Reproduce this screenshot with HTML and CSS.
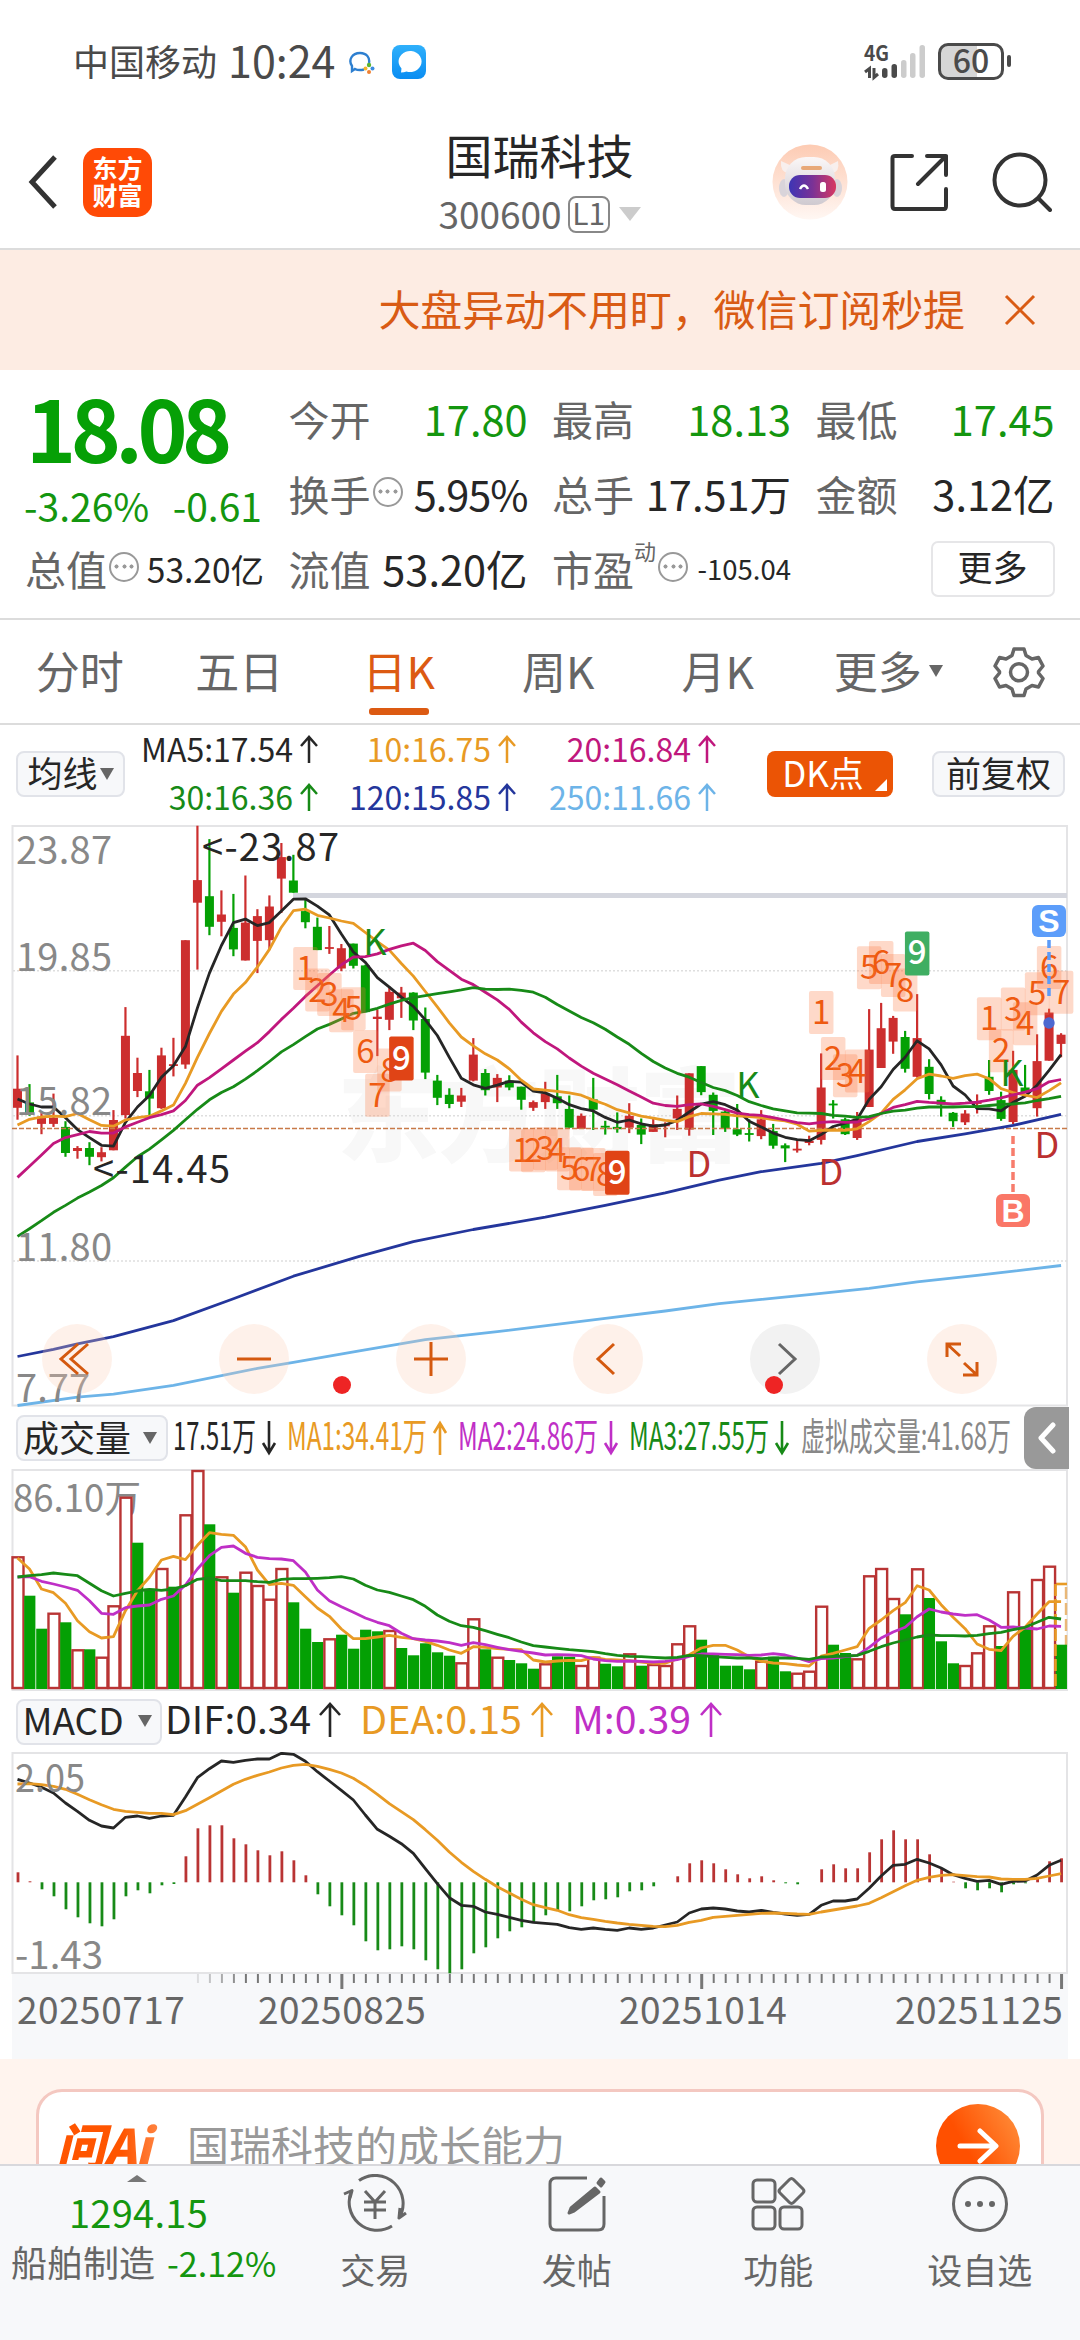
FILE: index.html
```html
<!DOCTYPE html>
<html lang="zh-CN">
<head>
    <meta charset="UTF-8">
    <meta name="viewport" content="width=device-width, initial-scale=1.0">
    <title>国瑞科技 300600</title>
    <link rel="stylesheet" href="styles.css">
</head>
<body>
    <div class="status-bar">
        <span class="carrier">中国移动</span>
        <span class="clock">10:24</span>
        <svg class="status-chat" width="26" height="24" viewBox="0 0 26 24">
            <path d="M15 18.500C11 19.500 8 19 6 18L3 20V15C-1 9 3 2 11 2C18 2 21 7 20 12" fill="none" stroke="#2d7fd0" stroke-width="2.400"/>
            <circle cx="20" cy="14" r="2.200" fill="#5cb531"/>
            <circle cx="23.500" cy="17.500" r="2" fill="#3c8ce0"/>
            <circle cx="16.500" cy="17.500" r="2" fill="#f5b52a"/>
            <circle cx="20" cy="21" r="2" fill="#f08030"/>
        </svg>
        <svg class="status-msg" width="34" height="34" viewBox="0 0 34 34">
            <defs><linearGradient id="msg" x1="0" y1="0" x2="0" y2="1"><stop offset="0" stop-color="#2fb0fb"/><stop offset="1" stop-color="#0a8df2"/></linearGradient></defs>
            <rect width="34" height="34" rx="8" fill="url(#msg)"/>
            <path d="M9 27.500L9.500 23.500A11.500 10.500 0 1 1 14.500 26.500Q12 27.500 9 27.500Z" fill="#fff"/>
        </svg>
        <svg class="signal" width="62" height="36" viewBox="0 0 62 36">
            <text x="0" y="17" font-size="21" font-weight="700" fill="#4a4a4a" textLength="25" lengthAdjust="spacingAndGlyphs">4G</text>
            <path d="M5.500 34V24.500L1 28M10 24V33.500L14 30" fill="none" stroke="#4a4a4a" stroke-width="3"/>
            <rect x="18" y="24" width="5.500" height="10" rx="2.700" fill="#4a4a4a"/>
            <rect x="27.500" y="20" width="5.500" height="14" rx="2.700" fill="#4a4a4a"/>
            <rect x="37" y="16" width="5.500" height="18" rx="2.700" fill="#ccc"/>
            <rect x="46" y="9" width="5.500" height="25" rx="2.700" fill="#ccc"/>
            <rect x="55.500" y="1" width="5.500" height="33" rx="2.700" fill="#ccc"/>
        </svg>
        <div class="battery">60</div>
        <div class="battery-tip"></div>
    </div>

    <div class="header">
        <svg class="back" width="32" height="56" viewBox="0 0 32 56"><path d="M28 3L5 28L28 53" fill="none" stroke="#333" stroke-width="5"/></svg>
        <div class="brand">东方<br>财富</div>
        <div class="stock">
            <div class="stock-name">国瑞科技</div>
            <div class="stock-code">300600<span class="level">L1</span><span class="tri tri-light"></span></div>
        </div>
        <svg class="robot" width="76" height="76" viewBox="0 0 76 76">
            <defs>
                <linearGradient id="halo" x1="0" y1="0" x2="0" y2="1"><stop offset="0" stop-color="#fdcbb3"/><stop offset="1" stop-color="#fff7f3"/></linearGradient>
                <linearGradient id="shell" x1="0" y1="0" x2="0" y2="1"><stop offset="0" stop-color="#fbf7f7"/><stop offset="1" stop-color="#cfcad0"/></linearGradient>
                <linearGradient id="visor"><stop offset="0" stop-color="#3d35b5"/><stop offset=".5" stop-color="#7a3296"/><stop offset="1" stop-color="#d83862"/></linearGradient>
            </defs>
            <circle cx="38" cy="38" r="37.500" fill="url(#halo)"/>
            <path d="M9 17Q8 28 16 29L20 22ZM66 17Q68 28 60 29L56 22Z" fill="#f8efed"/>
            <ellipse cx="12" cy="44" rx="5" ry="9" fill="#d9d4da"/>
            <ellipse cx="65" cy="44" rx="5" ry="9" fill="#d9d4da"/>
            <rect x="13" y="13" width="50" height="48" rx="21" fill="url(#shell)"/>
            <rect x="29" y="22" width="21" height="4" rx="2" fill="#e8a878"/>
            <rect x="17" y="31" width="47" height="23" rx="11" fill="url(#visor)"/>
            <path d="M28 45Q32 38 36 45" fill="none" stroke="#fff" stroke-width="2.500"/>
            <rect x="48" y="38" width="6" height="10" rx="2.500" fill="#fff"/>
        </svg>
        <svg class="share" width="58" height="58" viewBox="0 0 58 58" fill="none" stroke="#333" stroke-width="4" stroke-linecap="round" stroke-linejoin="round">
            <path d="M22 3H5Q2.500 3 2.500 5V53Q2.500 56 5 56H54Q56 56 56 53V36M37 3H56V22M56 3L28 31"/>
        </svg>
        <svg class="search" width="60" height="60" viewBox="0 0 60 60" fill="none" stroke="#333" stroke-width="4" stroke-linecap="round">
            <circle cx="28" cy="28" r="25.500"/><path d="M47 47L58 58"/>
        </svg>
    </div>

    <div class="notice">
        <span>大盘异动不用盯，微信订阅秒提</span>
        <svg width="32" height="32" viewBox="0 0 32 32"><path d="M2 2L30 30M30 2L2 30" stroke="#d95b14" stroke-width="3"/></svg>
    </div>

    <div class="quote">
        <div class="price-box">
            <div class="price">18.08</div>
            <div class="change"><span>-3.26%</span><span>-0.61</span></div>
        </div>
        <div class="cell"><span class="label">今开</span><span class="value down">17.80</span></div>
        <div class="cell"><span class="label">最高</span><span class="value down">18.13</span></div>
        <div class="cell"><span class="label">最低</span><span class="value down">17.45</span></div>
        <div class="cell"><span class="label">换手</span><i class="info"></i><span class="value tight">5.95%</span></div>
        <div class="cell"><span class="label">总手</span><span class="value">17.51万</span></div>
        <div class="cell"><span class="label">金额</span><span class="value">3.12亿</span></div>
        <div class="cell"><span class="label">总值</span><i class="info"></i><span class="value mid">53.20亿</span></div>
        <div class="cell"><span class="label">流值</span><span class="value">53.20亿</span></div>
        <div class="cell"><span class="label">市盈<sup>动</sup></span><i class="info"></i><span class="value small">-105.04</span></div>
        <div class="cell"><button class="more-btn">更多</button></div>
    </div>

    <div class="tabs">
        <span class="tab">分时</span>
        <span class="tab">五日</span>
        <span class="tab active">日K</span>
        <span class="tab">周K</span>
        <span class="tab">月K</span>
        <span class="tab tab-more">更多<span class="tri"></span></span>
        <svg width="52" height="52" viewBox="0 0 52 52" fill="none" stroke="#666" stroke-width="3.500" stroke-linejoin="round">
            <path d="M21 3H31L33 9.500L39 13L45.500 11.500L50 20L45.500 25.500V27L50 32.500L45.500 41L39 39.500L33 43L31 49.500H21L19 43L13 39.500L6.500 41L2 32.500L6.500 27V25.500L2 20L6.500 11.500L13 13L19 9.500Z"/>
            <circle cx="26" cy="26.300" r="8.500"/>
        </svg>
    </div>

    <div class="ma-row">
        <button class="chip chip-ma">均线<span class="tri tri-dark"></span></button>
        <div class="ma-grid">
            <span class="ma5">MA5:17.54<svg class="arr" viewBox="0 0 18 28"><path d="M9 28V2M1 11L9 2L17 11"/></svg></span>
            <span class="ma10">10:16.75<svg class="arr" viewBox="0 0 18 28"><path d="M9 28V2M1 11L9 2L17 11"/></svg></span>
            <span class="ma20">20:16.84<svg class="arr" viewBox="0 0 18 28"><path d="M9 28V2M1 11L9 2L17 11"/></svg></span>
            <span class="ma30">30:16.36<svg class="arr" viewBox="0 0 18 28"><path d="M9 28V2M1 11L9 2L17 11"/></svg></span>
            <span class="ma120">120:15.85<svg class="arr" viewBox="0 0 18 28"><path d="M9 28V2M1 11L9 2L17 11"/></svg></span>
            <span class="ma250">250:11.66<svg class="arr" viewBox="0 0 18 28"><path d="M9 28V2M1 11L9 2L17 11"/></svg></span>
        </div>
        <button class="chip chip-dk">DK点</button>
        <button class="chip chip-fq">前复权</button>
    </div>

    <div class="k-panel">
        <svg id="kChart" width="1080" height="582"></svg>
        <div class="chart-tools">
            <button><svg viewBox="0 0 70 70"><path d="M36 20L19 35L36 50M46 20L29 35L46 50"/></svg></button>
            <button><svg viewBox="0 0 70 70"><path d="M18 35H52"/></svg></button>
            <button><svg viewBox="0 0 70 70"><path d="M18 35H52M35 18V52"/></svg></button>
            <button><svg viewBox="0 0 70 70"><path d="M41 20L25 35L41 50"/></svg></button>
            <button class="off"><svg viewBox="0 0 70 70"><path d="M29 20L45 35L29 50"/></svg></button>
            <button><svg viewBox="0 0 70 70"><path d="M34 20H20V33M20 20L33 32M36 51H50V38M50 51L37 39"/></svg></button>
        </div>
        <i class="dot dot-left"></i>
        <i class="dot dot-right"></i>
    </div>

    <div class="legend">
        <button class="chip chip-vol">成交量<span class="tri tri-dark"></span></button>
        <svg class="legend-text" width="850" height="62">
            <text x="5" y="43" fill="#262626" textLength="83" lengthAdjust="spacingAndGlyphs">17.51万</text>
            <path d="M101 14V46M95 36L101 46L107 36" stroke="#262626"/>
            <text x="119" y="43" fill="#e89a24" textLength="140" lengthAdjust="spacingAndGlyphs">MA1:34.41万</text>
            <path d="M272 48V16M266 26L272 16L278 26" stroke="#e89a24"/>
            <text x="290" y="43" fill="#bf2fc6" textLength="140" lengthAdjust="spacingAndGlyphs">MA2:24.86万</text>
            <path d="M443 14V46M437 36L443 46L449 36" stroke="#bf2fc6"/>
            <text x="461" y="43" fill="#178a17" textLength="140" lengthAdjust="spacingAndGlyphs">MA3:27.55万</text>
            <path d="M614 14V46M608 36L614 46L620 36" stroke="#178a17"/>
            <text x="633" y="43" fill="#888" textLength="210" lengthAdjust="spacingAndGlyphs">虚拟成交量:41.68万</text>
        </svg>
        <div class="drawer"><svg width="18" height="32" viewBox="0 0 18 32"><path d="M15 3L3 16L15 29" fill="none" stroke="#fff" stroke-width="5" stroke-linecap="round" stroke-linejoin="round"/></svg></div>
    </div>

    <svg id="volChart" width="1080" height="222"></svg>

    <div class="legend legend-macd">
        <button class="chip chip-macd">MACD<span class="tri tri-dark"></span></button>
        <svg class="legend-text" width="600" height="62">
            <text x="3" y="43" fill="#262626" textLength="146" lengthAdjust="spacingAndGlyphs">DIF:0.34</text>
            <path d="M168 46V14M158 24L168 13L178 24" stroke="#262626"/>
            <text x="198" y="43" fill="#e89a24" textLength="162" lengthAdjust="spacingAndGlyphs">DEA:0.15</text>
            <path d="M380 46V14M370 24L380 13L390 24" stroke="#e89a24"/>
            <text x="410" y="43" fill="#bf2fc6" textLength="119" lengthAdjust="spacingAndGlyphs">M:0.39</text>
            <path d="M549 46V14M539 24L549 13L559 24" stroke="#bf2fc6"/>
        </svg>
    </div>

    <svg id="macdChart" width="1080" height="222"></svg>

    <div class="axis">
        <svg id="ticks" width="1080" height="20"></svg>
        <div class="dates">
            <span>20250717</span><span>20250825</span><span>20251014</span><span>20251125</span>
        </div>
    </div>

    <div class="ask">
        <div class="ask-box">
            <span class="ask-logo">问Ai</span>
            <span class="ask-text">国瑞科技的成长能力</span>
            <span class="ask-go"><svg width="44" height="44" viewBox="0 0 44 44"><path d="M4 22H38M24 7L40 22L24 37" fill="none" stroke="#fff" stroke-width="5" stroke-linecap="round" stroke-linejoin="round"/></svg></span>
        </div>
    </div>

    <div class="bottom-nav">
        <div class="index">
            <i class="up"></i>
            <div class="index-value">1294.15</div>
            <div class="index-name">船舶制造<span>-2.12%</span></div>
        </div>
        <div class="nav-item">
            <svg viewBox="0 0 66 60">
                <path d="M17 6.500A28 28 0 0 1 57 44L64 39M10 16A28 28 0 0 0 50 52M2 20L10 16.500L8 24M57 44L58 34"/>
                <path d="M23 17L33 28L43 17M33 28V45M22 28H44M22 36H44"/>
            </svg>
            <span>交易</span>
        </div>
        <div class="nav-item">
            <svg viewBox="0 0 66 60">
                <path d="M43 4H12Q6 4 6 10V50Q6 56 12 56H54Q60 56 60 50V22"/>
                <path d="M51 14L55 18L30 37L25 39L27 34ZM54 9L57 5L60 8L57 12Z" fill="#666"/>
            </svg>
            <span>发帖</span>
        </div>
        <div class="nav-item">
            <svg viewBox="0 0 66 60">
                <rect x="8" y="6" width="22" height="22" rx="4"/>
                <rect x="8" y="33" width="22" height="22" rx="4"/>
                <rect x="35" y="33" width="22" height="22" rx="4"/>
                <path d="M44.500 5.500Q46.500 3.500 48.500 5.500L58 15Q60 17 58 19L48.500 28.500Q46.500 30.500 44.500 28.500L35 19Q33 17 35 15Z"/>
            </svg>
            <span>功能</span>
        </div>
        <div class="nav-item">
            <svg viewBox="0 0 66 60">
                <circle cx="33" cy="30" r="26.500"/>
                <g fill="#666" stroke="none"><circle cx="21" cy="30" r="3"/><circle cx="33" cy="30" r="3"/><circle cx="45" cy="30" r="3"/></g>
            </svg>
            <span>设自选</span>
        </div>
    </div>

    <script src="chart.js"></script>
</body>
</html>
```
FILE: styles.css
```css
* {
    box-sizing: border-box;
}

body {
    margin: 0;
    width: 1080px;
    height: 2340px;
    overflow: hidden;
    background: #fff;
    color: #262626;
    font-family: "Noto Sans CJK SC", "Noto Sans", sans-serif;
    line-height: 1;
}

svg {
    display: block;
    flex-shrink: 0;
}

button {
    font-family: inherit;
    line-height: 1;
    padding: 0;
    color: #262626;
}

.down {
    color: #14960f !important;
}

.tri {
    border: 7px solid transparent;
    border-top: 12px solid #666;
    border-bottom: 0;
}

.tri-dark {
    margin-top: 4px;
}

.tri-light {
    margin-top: 2px;
    border-width: 14px 11px 0;
    border-top-color: #ccc;
}

/* status bar */
.status-bar {
    display: flex;
    align-items: center;
    height: 125px;
    padding: 0 69px 0 73px;
    color: #4a4a4a;
}

.carrier {
    font-size: 36px;
    margin-top: -6px;
}

.clock {
    font-size: 43px;
    width: 106px;
    margin: -6px 0 0 11px;
}

.status-chat {
    margin-left: 15px;
}

.status-msg {
    margin: -2px 0 0 17px;
}

.signal {
    overflow: visible;
    margin: -2px 12px 0 auto;
}

.battery {
    width: 66px;
    height: 37px;
    margin-top: -3px;
    border: 3px solid #4a4a4a;
    border-radius: 10px;
    background: linear-gradient(90deg, #d6d6d6 60%, #fff 60%);
    font-size: 32px;
    font-weight: 500;
    line-height: 27px;
    text-align: center;
}

.battery-tip {
    width: 4px;
    height: 12px;
    margin: -3px 0 0 3px;
    border-radius: 2px;
    background: #4a4a4a;
}

/* header */
.header {
    display: flex;
    align-items: center;
    height: 125px;
    padding: 0 28px 9px 27px;
    border-bottom: 2px solid #dcdcdc;
}

.brand {
    width: 69px;
    height: 69px;
    margin-left: 24px;
    padding-top: 6px;
    border-radius: 15px;
    background: #ff4a06;
    color: #fff;
    font-size: 25px;
    font-weight: 700;
    line-height: 27px;
    text-align: center;
}

.stock {
    flex: 1;
    padding-left: 155px;
    text-align: center;
}

.stock-name {
    font-size: 47px;
    font-weight: 400;
    margin: -2px 0 17px;
}

.stock-code {
    display: flex;
    align-items: center;
    justify-content: center;
    font-size: 37px;
    color: #666;
}

.level {
    width: 42px;
    height: 37px;
    margin: 2px 9px 0 6px;
    border: 2px solid #888;
    border-radius: 8px;
    font-size: 30px;
    line-height: 29px;
}

.robot {
    margin-right: 42px;
}

.share {
    margin-right: 44px;
}

/* notice */
.notice {
    display: flex;
    align-items: center;
    justify-content: flex-end;
    height: 120px;
    padding-right: 44px;
    background: #fdece3;
    color: #d95b14;
    font-size: 42px;
}

.notice span {
    margin: -4px 39px 0 0;
    letter-spacing: -0.100px;
}

/* quote */
.quote {
    display: grid;
    grid-template-columns: repeat(4, 239px);
    grid-template-rows: repeat(3, 75px);
    column-gap: 24.500px;
    height: 250px;
    padding: 11px 0 0 25px;
    border-bottom: 2px solid #dcdcdc;
}

.price-box {
    grid-row: span 2;
    color: #06a006;
}

.price {
    font-size: 85px;
    font-weight: 700;
    letter-spacing: -5.500px;
    margin: 2px 0 0 1px;
}

.change {
    display: flex;
    justify-content: space-between;
    font-size: 39px;
    margin: 18px 2px 0 -1px;
    color: #14960f;
}

.cell {
    display: flex;
    align-items: center;
}

.label {
    font-size: 41px;
    color: #666;
}

.label sup {
    font-size: 22px;
    line-height: 0;
    vertical-align: 26px;
}

.info {
    width: 30px;
    height: 30px;
    margin: -4px 2px 0;
    border: 2px solid #999;
    border-radius: 50%;
    background: radial-gradient(circle, #999 1.800px, transparent 2.300px) center / 7px 7px no-repeat,
        radial-gradient(circle, #999 1.800px, transparent 2.300px) 2px center / 7px 7px no-repeat,
        radial-gradient(circle, #999 1.800px, transparent 2.300px) 17px center / 7px 7px no-repeat;
}

.value {
    margin-left: auto;
    font-size: 41.500px;
    color: #262626;
}

.value.tight {
    letter-spacing: -1px;
}

.value.mid {
    font-size: 33.500px;
}

.value.small {
    font-size: 27.500px;
}

.more-btn {
    width: 124px;
    height: 56px;
    margin-left: auto;
    padding-bottom: 6px;
    border: 2px solid #e6e6e8;
    border-radius: 7px;
    background: #fff;
    font-size: 35px;
}

/* period tabs */
.tabs {
    display: grid;
    grid-template-columns: repeat(6, 159.500px) 1fr;
    align-items: center;
    justify-items: center;
    height: 105px;
    border-bottom: 2px solid #dcdcdc;
    font-size: 44px;
    color: #666;
}

.tab {
    display: flex;
    align-items: center;
    height: 103px;
    padding-bottom: 4px;
}

.tab.active {
    position: relative;
    color: #dc5a12;
}

.tab.active::after {
    content: "";
    position: absolute;
    left: 50%;
    bottom: 8px;
    width: 60px;
    height: 7px;
    margin-left: -30px;
    border-radius: 3px;
    background: #dc5a12;
}

.tab-more {
    padding-left: 22px;
}

.tab-more .tri {
    margin: 2px 0 0 7px;
}

/* moving averages */
.ma-row {
    display: flex;
    align-items: center;
    height: 100px;
    padding: 0 15px 2px 16px;
}

.chip {
    display: flex;
    align-items: center;
    justify-content: center;
    gap: 5px;
    height: 46px;
    padding-bottom: 5px;
    border: 2px solid #e1e3e9;
    border-radius: 8px;
    background: #f7f8fa;
    font-size: 35px;
    white-space: nowrap;
}

.chip-ma {
    width: 109px;
    gap: 2px;
}

.ma-grid {
    display: grid;
    grid-template-columns: 193px 198px 200px;
    row-gap: 16px;
    justify-items: end;
    margin-top: -5px;
    font-size: 32px;
}

.ma-grid span {
    display: flex;
    align-items: center;
}

.arr {
    width: 18px;
    height: 28px;
    margin: 3px 0 0 7px;
    fill: none;
    stroke: currentColor;
    stroke-width: 2.500;
}

.ma5 { color: #262626; }
.ma10 { color: #e89a24; }
.ma20 { color: #c0177d; }
.ma30 { color: #178a17; }
.ma120 { color: #24369c; }
.ma250 { color: #6db4e8; }

.chip-dk {
    position: relative;
    width: 126px;
    margin-left: 51px;
    padding-right: 14px;
    border: 0;
    background: #eb5405;
    color: #fff;
}

.chip-dk::after {
    content: "";
    position: absolute;
    right: 6px;
    bottom: 6px;
    border-left: 12px solid transparent;
    border-bottom: 12px solid #fff;
}

.chip-fq {
    width: 133px;
    margin-left: auto;
}

/* candles */
.k-panel {
    position: relative;
    height: 582px;
}

.chart-tools {
    position: absolute;
    left: 42px;
    top: 499px;
    display: flex;
    gap: 107px;
}

.chart-tools button {
    width: 70px;
    height: 70px;
    border: 0;
    border-radius: 50%;
    background: rgba(252, 205, 180, 0.28);
}

.chart-tools svg {
    fill: none;
    stroke: #d4590f;
    stroke-width: 3;
}

.chart-tools .off {
    background: #f2f2f2;
}

.chart-tools .off svg {
    stroke: #666;
}

.dot {
    position: absolute;
    top: 551px;
    width: 18px;
    height: 18px;
    border-radius: 50%;
    background: #ee2424;
}

.dot-left {
    left: 333px;
}

.dot-right {
    left: 765px;
}

/* indicator legends */
.legend {
    display: flex;
    align-items: center;
    height: 62px;
    padding-left: 16px;
}

.legend-macd {
    height: 61px;
}

.legend-text {
    font-size: 38px;
    fill: none;
    stroke-width: 2.600;
}

.legend-text text {
    stroke: none;
}

.chip-vol {
    width: 152px;
    gap: 12px;
    padding-right: 4px;
    font-size: 36px;
}

.chip-macd {
    width: 146px;
    gap: 14px;
    padding-right: 4px;
    font-size: 37px;
}

.drawer {
    display: flex;
    align-items: center;
    justify-content: center;
    width: 45px;
    height: 62px;
    margin-left: 6px;
    border-radius: 12px 0 0 12px;
    background: #999;
}

/* dates */
.axis {
    height: 85px;
    margin: 0 12px;
    background: #f7f8fa;
}

.axis svg {
    margin-left: -12px;
}

.dates {
    display: grid;
    grid-template-columns: 241px 361px 276px 1fr;
    margin-top: -4px;
    padding-left: 5px;
    font-size: 37px;
    letter-spacing: 0.500px;
    color: #666;
}

/* AI question */
.ask {
    height: 105px;
    padding: 30px 36px 0;
    background: #fff4ee;
    overflow: hidden;
}

.ask-box {
    display: flex;
    align-items: center;
    height: 116px;
    padding: 0 21px;
    border: 3px solid #f4c8c1;
    border-radius: 26px;
    background: #fff;
}

.ask-logo {
    width: 120px;
    margin: -8px 0 0 -4px;
    font-size: 49px;
    font-weight: 900;
    font-style: italic;
    letter-spacing: -1px;
    background: linear-gradient(90deg, #ff5500 55%, #ff9a60);
    -webkit-background-clip: text;
    background-clip: text;
    color: transparent;
}

.ask-text {
    margin: -6px 0 0 11px;
    font-size: 42px;
    color: #999;
}

.ask-go {
    display: flex;
    align-items: center;
    justify-content: center;
    width: 84px;
    height: 84px;
    margin: -2px 0 0 auto;
    border-radius: 50%;
    background: linear-gradient(60deg, #ff5000 40%, #ff9440);
}

/* bottom navigation */
.bottom-nav {
    position: relative;
    display: grid;
    grid-template-columns: 274px repeat(4, 201.500px);
    height: 177px;
    border-top: 2px solid #d8d8dc;
    background: #f7f8fa;
    color: #666;
}

.index {
    display: flex;
    flex-direction: column;
    align-items: center;
}

.up {
    margin-top: 9px;
    border: 10px solid transparent;
    border-top: 0;
    border-bottom: 7px solid #777;
}

.index-value {
    margin: 11px 0 0 3px;
    font-size: 38px;
    letter-spacing: 0.300px;
    color: #14960f;
}

.index-name {
    align-self: flex-start;
    margin: 12px 0 0 11px;
    font-size: 36px;
    white-space: nowrap;
}

.index-name span {
    margin-left: 12px;
    font-size: 34px;
    color: #14960f;
}

.nav-item {
    display: flex;
    flex-direction: column;
    align-items: center;
    padding: 8px 0 0 1px;
    font-size: 35px;
}

.nav-item svg {
    width: 66px;
    height: 60px;
    margin-bottom: 17px;
    fill: none;
    stroke: #666;
    stroke-width: 3;
    stroke-linejoin: round;
}

/* text inside the charts */
.scale {
    font-size: 38px;
    fill: #888;
}

.peak {
    font-size: 38px;
    fill: #262626;
}

.mark {
    font-size: 36px;
    text-anchor: middle;
}

.td {
    font-size: 33px;
    text-anchor: middle;
    fill: #ee5a10;
}

.td-end {
    font-size: 33px;
    font-weight: 500;
    text-anchor: middle;
    fill: #fff;
}

.flag {
    font-family: "Liberation Sans", sans-serif;
    font-size: 32px;
    font-weight: 700;
    text-anchor: middle;
    fill: #fff;
}

.watermark {
    font-size: 102px;
    font-weight: 900;
    fill: #f8f8f8;
}
```
FILE: chart.js
```javascript
const RED = '#cc2e2e';
const GREEN = '#04a004';
const X0 = 17.5;
const STEP = 11.995;
const x = i => X0 + i * STEP;

function rect(l, t, w, h, fill, extra = '') {
    return `<rect x="${l}" y="${t}" width="${w}" height="${h}" fill="${fill}" ${extra}/>`;
}

function seg(x1, y1, x2, y2, color, w, extra = '') {
    return `<path d="M${x1} ${y1}L${x2} ${y2}" stroke="${color}" stroke-width="${w}" ${extra}/>`;
}

function text(cls, tx, ty, str, extra = '') {
    return `<text class="${cls}" x="${tx}" y="${ty}" ${extra}>${str}</text>`;
}

// pts: array of levels, or of [index, level] pairs
function line(pts, y, color) {
    const d = pts.map((p, i) => Array.isArray(p) ? `${x(p[0])},${y(p[1])}` : `${x(i)},${y(p)}`).join(' ');
    return `<polyline points="${d}" fill="none" stroke="${color}" stroke-width="2.8" stroke-linejoin="round"/>`;
}

function frame(h) {
    return `<rect x="12.5" y="1" width="1054.5" height="${h}" fill="none" stroke="#e4e4e6" stroke-width="2"/>`;
}

// ---------- candles: [high, body top, body bottom, low, up] ----------
const candles = [
    [615,702,752,783,1],[690,738,766,773,0],[765,775,794,821,1],[715,778,794,802,1],[787,802,870,880,0],
    [852,857,865,885,1],[842,857,880,902,0],[855,868,881,892,1],[758,784,863,863,1],[489,564,771,780,1],
    [621,661,708,724,1],[653,709,728,772,0],[595,615,753,755,1],[569,638,642,670,1],[314,314,639,650,1],
    [15,157,216,391,1],[50,199,279,301,0],[184,247,266,304,1],[193,282,338,356,0],[145,268,367,367,1],
    [233,251,316,400,1],[197,226,314,340,1],[60,97,153,243,1],[91,158,190,190,0],[205,238,267,283,0],
    [255,279,340,340,0],[277,332,336,350,1],[324,335,388,395,1],[323,323,381,388,0],[378,380,502,502,0],
    [495,514,520,617,1],[435,449,522,549,1],[436,451,466,517,1],[450,451,524,549,0],[490,520,660,677,0],
    [666,681,726,745,0],[701,718,742,753,0],[700,720,736,750,1],[570,613,681,683,1],[651,661,706,720,0],
    [664,674,699,737,1],[667,681,699,706,0],[697,697,731,757,0],[733,737,752,760,1],[684,715,737,755,1],
    [666,722,740,755,0],[720,755,804,804,0],[767,773,807,807,1],[674,730,757,810,0],[786,799,803,822,0],
    [764,802,808,817,0],[740,773,804,818,1],[780,797,822,847,0],[780,795,815,815,1],[790,794,800,829,1],
    [720,755,780,810,1],[662,662,809,825,1],[643,643,711,719,0],[712,718,760,823,0],[758,762,807,815,0],
    [742,808,822,826,0],[782,818,822,840,0],[758,782,826,834,1],[794,813,851,859,0],[845,850,858,894,0],
    [835,859,863,869,1],[825,838,844,850,1],[610,699,836,848,1],[732,741,745,780,0],[778,782,821,823,0],
    [763,780,831,836,1],[494,600,750,750,1],[478,544,648,648,1],[512,517,579,611,1],[551,567,650,660,0],
    [455,570,671,673,1],[625,645,716,730,0],[722,731,744,775,0],[763,765,787,802,0],[758,767,790,797,1],
    [717,737,741,767,1],[627,671,708,718,0],[710,732,781,786,0],[603,653,789,795,1],[640,699,712,714,0],
    [560,630,753,775,1],[493,503,629,629,1],[557,561,585,620,1]
];
const ma5 = [729,742,750,750,778,809,830,850,852,790,750,720,672,642,592,491,400,328,268,259,276,268,238,207,206,225,248,298,345,372,412,437,463,487,522,563,620,675,692,701,693,683,685,708,713,727,744,754,760,777,790,784,794,800,797,785,763,742,736,744,758,787,802,818,829,835,838,822,801,792,782,730,697,652,620,577,598,640,695,718,754,755,760,738,722,693,654,613];
const ma10 = [797,782,776,774,775,767,783,798,800,784,778,774,760,745,688,620,558,500,455,425,384,338,280,237,233,249,256,264,270,294,318,340,375,408,448,488,530,567,590,611,627,650,680,703,706,709,713,719,732,743,757,765,774,779,785,788,775,767,768,769,773,775,778,783,786,795,813,811,810,811,807,788,766,730,705,676,664,669,675,668,664,676,702,712,719,725,707,687];
const ma20 = [934,905,875,845,830,822,814,818,818,802,790,778,770,760,733,693,673,650,627,604,582,553,521,492,461,433,405,378,358,357,350,338,329,322,341,370,393,416,430,450,470,495,528,556,579,598,622,643,662,677,692,708,724,740,746,748,744,742,748,757,766,770,772,778,784,791,794,790,788,790,789,780,767,751,744,735,738,740,742,740,737,732,726,718,711,702,684,678];
const ma30 = [1088,1068,1047,1025,1007,988,972,955,935,907,880,860,836,811,783,756,731,712,697,677,655,631,606,587,566,546,534,520,505,500,492,481,471,464,459,454,449,444,438,442,443,442,445,450,463,482,499,516,530,547,567,586,610,631,648,662,672,686,699,707,720,736,746,755,760,765,766,767,772,774,777,775,767,761,758,753,750,750,750,749,749,746,743,742,739,733,728,722];
const ma120 = [[0,1402],[3,1383],[5,1369],[8,1350],[13,1308],[18,1251],[23,1192],[28.5,1140],[33,1102],[38,1070],[44,1038],[49,1007],[54,974],[58.5,941],[62,919],[67,897],[70,877],[75,840],[79,820],[83,798],[87,769]];
const ma250 = [[0,1530],[5,1508],[8,1500],[13,1477],[20,1433],[23,1417],[28.5,1387],[34,1358],[40,1337],[49,1302],[54,1283],[58.5,1264],[66,1240],[71,1224],[75,1207],[80,1190],[87,1164]];

// nine-turn counters: [index, level, label]
const turns = [
    [24,332,1],[25,388,2],[26,400,3],[27,442,4],[28,437,5],[29,549,6],[30,663,7],[31,597,8],
    [42,806,1],[43,808,2],[44,803,3],[45,806,4],[46,855,5],[47,856,6],[48,857,7],[49,870,8],
    [67,447,1],[68,567,2],[69,612,3],[70,600,4],[71,330,5],[72,316,6],[73,350,7],[74,388,8],
    [81,463,1],[82,547,2],[83,438,3],[84,476,4],[85,398,5],[86,329,6],[87,394,7]
];
const turnEnds = [[32,566,'#e04416'],[50,864,'#e04416'],[75,291,'#3fae62']];

function drawCandles() {
    const y = v => +(v / 2.613 - 5).toFixed(1);
    let s = text('watermark', 337, 329, '东方财富', 'textLength="404"');
    s += frame(579.5);
    [394, 773, 1152].forEach(v => {
        s += seg(13, y(v), 1067, y(v), '#dedede', 1.5, 'stroke-dasharray="2 2"');
    });
    s += seg(293, y(197), 1067, y(197), '#d4d6de', 5);
    candles.forEach(([h, t, b, l, up], i) => {
        const c = up ? RED : GREEN;
        s += seg(x(i), y(h), x(i), y(l), c, 2.2);
        s += rect(x(i) - 4.5, y(t), 9, Math.max(1.8, y(b) - y(t)), c);
    });
    s += seg(12, y(806), 1067, y(806), '#c87a48', 1.5, 'stroke-dasharray="5 2"');
    s += line(ma250, y, '#6db4e8') + line(ma120, y, '#24369c');
    s += line(ma5, y, '#262626') + line(ma10, y, '#e89a24') + line(ma20, y, '#c0177d') + line(ma30, y, '#178a17');

    [['23.87', 39], ['19.85', 146], ['15.82', 290], ['11.80', 435.5], ['7.77', 577]].forEach(([t, ty]) => {
        s += text('scale', 16, ty, t, `textLength="${t.length > 4 ? 96 : 74}"`);
    });
    s += text('peak', 202, 36, '&lt;-23.87', 'textLength="137"');
    s += text('peak', 93, 357.5, '&lt;-14.45', 'textLength="137"');

    turns.forEach(([i, v, n]) => {
        s += rect(x(i) - 12.2, y(v), 24.5, 43, 'rgba(250,120,60,.28)', 'rx="2"');
        s += text('td', x(i), y(v) + 33, n);
    });
    turnEnds.forEach(([i, v, c]) => {
        s += rect(x(i) - 12.2, y(v), 24.5, 44, c, 'rx="2"');
        s += text('td-end', x(i), y(v) + 33, 9);
    });

    [[375, 130], [748, 273], [1012, 261]].forEach(([tx, ty]) => {
        s += text('mark', tx, ty, 'K', 'fill="#178a17"');
    });
    [[699, 351.5], [831, 360], [1047, 332.5]].forEach(([tx, ty]) => {
        s += text('mark', tx, ty, 'D', 'fill="#bb3030"');
    });

    s += seg(1049, 115, 1049, 172, '#5b9bf8', 3.5, 'stroke-dasharray="8 4"');
    s += '<circle cx="1049" cy="198" r="5.7" fill="#4d68d0"/>';
    s += rect(1032, 80, 34, 32, '#5c9dfa', 'rx="6"') + text('flag', 1049, 107, 'S');
    s += seg(1013, 311, 1013, 368, '#f77c6c', 3.5, 'stroke-dasharray="8 4"');
    s += rect(996, 369, 34, 33, '#fa7767', 'rx="6"') + text('flag', 1013, 396.5, 'B');
    document.getElementById('kChart').innerHTML = s;
}

// ---------- volume ----------
const vol = [467,585,684,636,665,746,746,768,614,288,426,564,502,558,341,208,371,527,576,513,553,594,502,605,684,724,713,702,744,687,692,688,742,764,728,755,765,785,653,746,768,778,788,804,788,767,768,793,768,789,797,758,795,790,793,728,674,717,762,795,795,806,780,768,812,816,810,615,732,757,773,524,502,592,641,503,592,722,788,793,755,674,736,572,680,535,495,732];
const volRed = [0,3,5,7,8,9,12,14,15,17,19,20,21,22,26,31,37,38,40,44,47,48,51,53,54,55,56,62,65,66,67,70,71,72,73,75,79,80,81,83,85,86];
const vma1 = [472,505,565,576,608,660,693,712,708,630,570,530,478,467,477,434,396,401,404,438,508,552,548,554,588,622,647,685,714,714,709,704,710,714,722,734,748,758,738,740,744,746,747,778,784,781,779,780,770,776,778,780,784,788,788,775,762,742,734,734,748,768,782,787,789,793,796,766,758,748,738,683,658,630,606,555,568,612,650,684,730,746,750,707,680,640,603,603];
const vma2 = [529,528,542,550,559,569,600,638,641,621,616,613,596,586,553,505,465,440,436,458,470,474,475,480,514,568,600,618,635,652,665,675,698,714,718,721,726,734,726,732,740,747,752,757,763,762,763,765,775,780,782,781,782,784,782,777,767,760,760,761,762,764,763,759,763,772,783,774,772,768,764,740,712,694,680,648,625,634,640,644,642,658,680,679,682,685,676,677];
const vma3 = [529,525,522,517,521,525,548,570,586,578,571,566,569,565,555,536,532,540,540,540,543,545,536,534,534,533,531,528,535,554,568,575,586,597,617,643,662,675,680,690,701,711,724,735,739,743,747,750,753,759,764,767,768,770,772,770,764,765,768,770,772,772,774,772,772,773,776,769,768,766,764,752,738,727,718,709,703,705,705,706,704,699,695,687,680,665,650,655];

function drawVolume() {
    const y = v => +((v - 205) / 3).toFixed(1);
    const base = 220;
    let s = frame(220);
    s += text('scale', 13, 43, '86.10万', 'textLength="128" lengthAdjust="spacingAndGlyphs"');
    // projected volume of the running day
    s += rect(1055.5, 114, 11, 105, '#fff') + seg(1055, 115, 1067, 115, '#e89a24', 2.6);
    s += seg(1066, 118, 1066, 180, '#e9b878', 2.4, 'stroke-dasharray="12 4"');
    vol.forEach((v, i) => {
        if (volRed.includes(i)) {
            s += `<rect x="${x(i) - 5}" y="${y(v) + 1}" width="11" height="${base - y(v) - 2}" fill="#fff" stroke="#b93434" stroke-width="2.4"/>`;
        } else {
            s += rect(x(i) - 5.3, y(v), 11.2, base - y(v), GREEN);
        }
    });
    s += seg(1055.5, 115, 1055.5, 219, '#e89a24', 2.6, 'stroke-dasharray="12 3"');
    s += line(vma1, y, '#e89a24') + line(vma2, y, '#bf2fc6') + line(vma3, y, '#178a17');
    document.getElementById('volChart').innerHTML = s;
}

// ---------- macd ----------
const hist = [546,573,597,618,657,681,699,708,687,618,600,609,585,581,498,414,405,405,444,462,480,495,483,510,555,612,648,675,705,753,780,777,768,777,810,837,849,837,789,771,744,723,711,696,675,660,663,648,630,627,621,603,600,588,576,558,519,510,519,537,552,564,558,570,579,582,576,537,522,534,534,486,447,420,447,447,492,534,574,594,600,594,606,582,579,560,513,504];
const dif = [267,278,291,308,338,363,390,407,413,381,377,384,377,375,320,262,235,212,216,210,206,206,189,192,213,244,272,300,329,374,417,438,460,489,535,580,622,645,648,665,672,681,690,696,699,702,712,717,713,717,720,713,717,713,704,695,668,656,653,656,662,665,660,666,671,675,672,645,632,632,626,594,557,525,522,507,518,533,553,564,573,570,582,573,572,554,525,510];
const dea = [281,280,283,288,297,312,328,343,357,363,366,369,369,373,361,342,322,302,282,267,255,245,233,225,222,228,237,248,264,286,312,340,364,388,418,450,485,516,543,567,589,608,627,643,652,660,673,682,687,693,698,702,705,708,709,705,696,690,681,678,675,672,669,668,669,671,672,665,659,653,647,639,622,604,586,570,561,555,553,556,559,560,566,567,567,564,557,550];

function drawMacd() {
    const y = v => +((v - 185) / 3).toFixed(1);
    let s = frame(220);
    hist.forEach((v, i) => {
        if (v !== 576) {
            s += seg(x(i) + .5, y(576), x(i) + .5, y(v), v < 576 ? '#b93434' : '#178a17', 2.8);
        }
    });
    s += line(dif, y, '#262626') + line(dea, y, '#e89a24');
    s += text('scale', 15, 40, '2.05', 'textLength="70" lengthAdjust="spacingAndGlyphs"');
    s += text('scale', 15, 217, '-1.43', 'textLength="88" lengthAdjust="spacingAndGlyphs"');
    document.getElementById('macdChart').innerHTML = s;
}

function drawTicks() {
    let s = '';
    for (let i = 15; i < 88; i++) {
        const major = i === 27 || i === 57 || i === 87;
        const fade = Math.min(1, (i - 14) / 5);
        s += seg(x(i) + .5, 0, x(i) + .5, major ? 15 : 9, '#777', major ? 3 : 2, `opacity="${fade}"`);
    }
    document.getElementById('ticks').innerHTML = s;
}

drawCandles();
drawVolume();
drawMacd();
drawTicks();
```
